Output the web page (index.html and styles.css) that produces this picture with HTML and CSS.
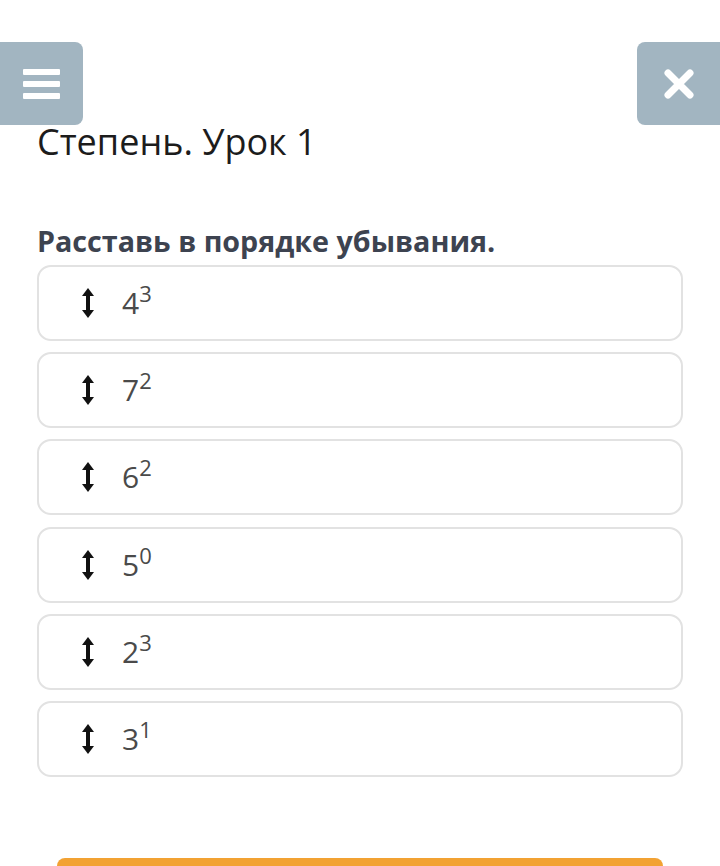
FILE: index.html
```html
<!DOCTYPE html>
<html lang="ru">
<head>
    <meta charset="UTF-8">
    <meta name="viewport" content="width=device-width, initial-scale=1.0">
    <title>Степень. Урок 1</title>
    <link rel="stylesheet" href="styles.css">
</head>
<body>
    <div class="topbar">
        <button class="tb-btn menu-btn" aria-label="Меню">
            <span class="bar"></span>
            <span class="bar"></span>
            <span class="bar"></span>
        </button>
        <button class="tb-btn close-btn" aria-label="Закрыть">
            <svg width="32" height="32" viewBox="0 0 32 32">
                <path d="M5 5 L27 27 M27 5 L5 27" stroke="#fff" stroke-width="7" stroke-linecap="round"/>
            </svg>
        </button>
    </div>

    <div class="content">
        <h1 class="lesson-title">Степень. Урок 1</h1>
        <h2 class="task">Расставь в порядке убывания.</h2>

        <div class="sort-list">
            <div class="sort-item"><span class="handle"></span><span class="val">4<sup>3</sup></span></div>
            <div class="sort-item"><span class="handle"></span><span class="val">7<sup>2</sup></span></div>
            <div class="sort-item"><span class="handle"></span><span class="val">6<sup>2</sup></span></div>
            <div class="sort-item"><span class="handle"></span><span class="val">5<sup>0</sup></span></div>
            <div class="sort-item"><span class="handle"></span><span class="val">2<sup>3</sup></span></div>
            <div class="sort-item"><span class="handle"></span><span class="val">3<sup>1</sup></span></div>
        </div>

        <div class="submit-bar"></div>
    </div>

    <script>
        // draw the drag handle arrow in every row
        const arrow = '<svg width="14" height="32" viewBox="0 0 14 32">' +
            '<path d="M7 1 L13 9 L9 9 L9 23 L13 23 L7 31 L1 23 L5 23 L5 9 L1 9 Z" fill="#111"/></svg>';
        document.querySelectorAll('.handle').forEach(function (h) {
            h.innerHTML = arrow;
        });
    </script>
</body>
</html>
```

FILE: styles.css
```css
body {
    margin: 0;
    font-family: "Open Sans", "Noto Sans", Arial, sans-serif;
    background: #fff;
    overflow: hidden;
}
.topbar {
    display: flex;
    justify-content: space-between;
    padding-top: 42px;
    height: 83px;
}
.tb-btn {
    width: 83px;
    height: 83px;
    border: none;
    background-color: #a2b5c1;
    display: flex;
    align-items: center;
    justify-content: center;
    flex-direction: column;
    gap: 6px;
    padding: 0;
}
.menu-btn {
    border-radius: 0 8px 8px 0;
}
.close-btn {
    border-radius: 8px 0 0 8px;
}
.bar {
    display: block;
    width: 37px;
    height: 6px;
    background: #fff;
    border-radius: 1px;
}
.content {
    padding: 0 37px;
}
.lesson-title {
    margin: 0;
    font-size: 36px;
    font-weight: 400;
    color: #1c1c1c;
    line-height: 40px;
    margin-top: -3px;
}
.task {
    margin: 61px 0 0;
    font-size: 28.7px;
    font-weight: 700;
    color: #3d4350;
    line-height: 36px;
}
.sort-list {
    display: flex;
    flex-direction: column;
    gap: 11.2px;
    margin-top: 6px;
}
.sort-item {
    height: 72px;
    border: 2px solid #e2e2e2;
    border-radius: 14px;
    display: flex;
    align-items: center;
    padding-left: 42px;
}
.handle {
    width: 14px;
    height: 32px;
    margin-right: 27px;
}
.val {
    font-size: 30px;
    color: #4a4a4a;
    line-height: 1;
}
.val sup {
    font-size: 22px;
    vertical-align: 12px;
    line-height: 0;
}
.submit-bar {
    margin: 81px 20px 0;
    height: 40px;
    background: #f2a233;
    border-radius: 8px 8px 0 0;
}
```
